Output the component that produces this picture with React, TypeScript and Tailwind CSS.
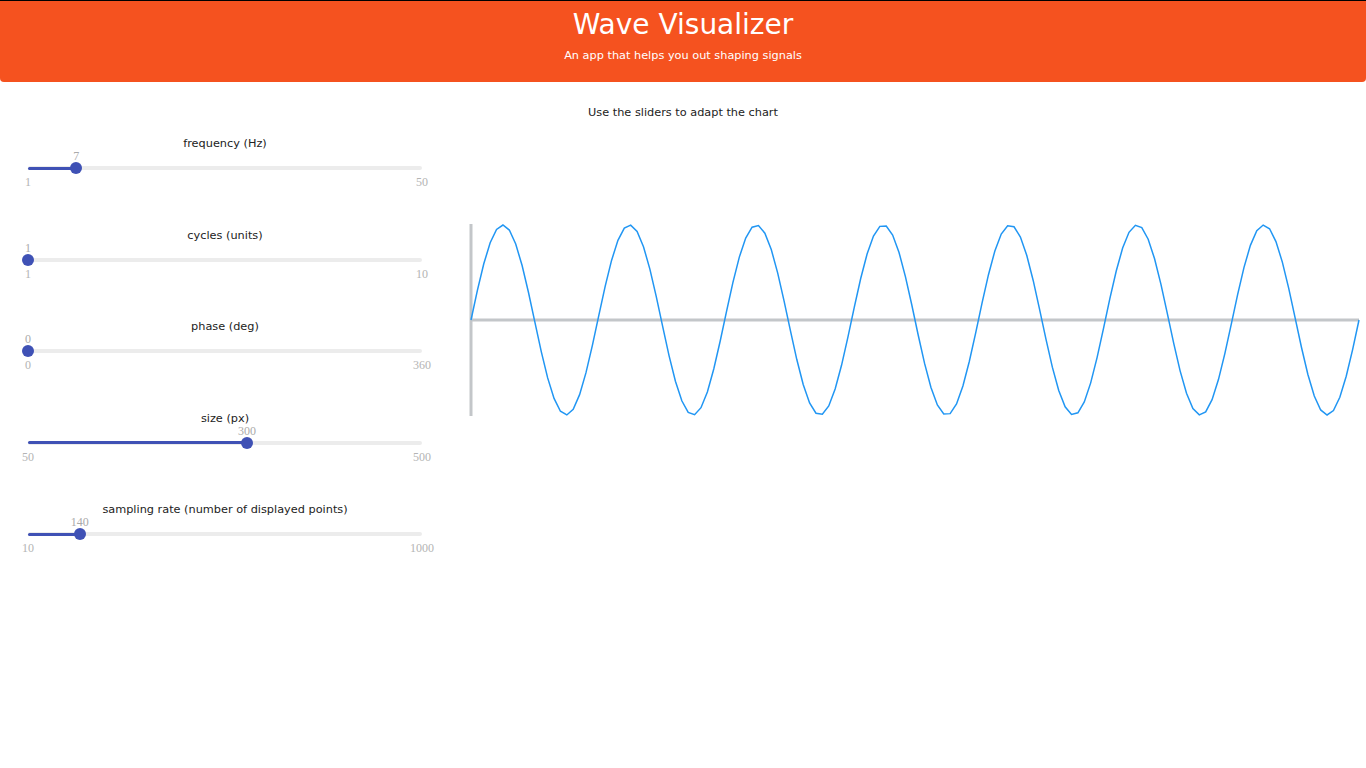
import { useState } from "react"

type SliderDef = {
    key: string;
    label: string;
    min: number;
    max: number;
}

const SLIDERS: SliderDef[] = [
    { key: "frequency", label: "frequency (Hz)", min: 1, max: 50 },
    { key: "cycles", label: "cycles (units)", min: 1, max: 10 },
    { key: "phase", label: "phase (deg)", min: 0, max: 360 },
    { key: "size", label: "size (px)", min: 50, max: 500 },
    { key: "sampling", label: "sampling rate (number of displayed points)", min: 10, max: 1000 },
]

const font = "font-['DejaVu_Sans',sans-serif]"
const serif = "font-['Liberation_Serif','DejaVu_Serif',serif]"

const Slider = ({ def, value, onChange }: { def: SliderDef; value: number; onChange: (v: number) => void }) => {
    const pct = ((value - def.min) / (def.max - def.min)) * 100

    const handleClick = (e: React.MouseEvent<HTMLDivElement>) => {
        const rect = e.currentTarget.getBoundingClientRect()
        const ratio = Math.min(1, Math.max(0, (e.clientX - rect.left) / rect.width))
        onChange(Math.round(def.min + ratio * (def.max - def.min)))
    }

    return (
        <div className="h-[91.5px] pt-px">
            <div className={`h-4 leading-4 text-[11.3px] text-center text-[#222] ${font}`}>{def.label}</div>
            <div className="relative h-[10px]">
                <span
                    className={`absolute -top-[2px] -translate-x-1/2 text-[12px] leading-3 text-[#aaa] ${serif}`}
                    style={{ left: `${pct}%` }}
                >
                    {value}
                </span>
            </div>
            <div className="relative h-3 flex items-center cursor-pointer" onClick={handleClick}>
                <div className="w-full h-[4px] rounded-full bg-[#ececec]" />
                <div className="absolute left-0 h-[3px] rounded-full bg-[#3f51b5]" style={{ width: `${pct}%` }} />
                <div
                    className="absolute w-3 h-3 -translate-x-1/2 rounded-full bg-[#3f51b5]"
                    style={{ left: `${pct}%` }}
                />
            </div>
            <div className={`relative h-3 mt-[2px] text-[12px] leading-3 text-[#b4b4b4] ${serif}`}>
                <span className="absolute left-0 -translate-x-1/2">{def.min}</span>
                <span className="absolute right-0 translate-x-1/2">{def.max}</span>
            </div>
        </div>
    )
}

const WaveChart = ({ values }: { values: Record<string, number> }) => {
    const width = 888
    const height = 190
    const x0 = 2
    const mid = height / 2 + 1
    const amp = height / 2
    const n = values.sampling
    const periods = values.frequency * values.cycles
    const phase = (values.phase * Math.PI) / 180

    const points: string[] = []
    for (let i = 0; i < n; i++) {
        const t = i / (n - 1)
        const x = x0 + t * width
        const y = mid - amp * Math.sin(2 * Math.PI * periods * t + phase)
        points.push(`${x.toFixed(2)},${y.toFixed(2)}`)
    }

    return (
        <svg width={width + 4} height={height + 2} className="block">
            <line x1={x0} y1={0} x2={x0} y2={height + 2} stroke="#c3c6c9" strokeWidth={3} />
            <line x1={x0} y1={mid} x2={x0 + width} y2={mid} stroke="#c3c6c9" strokeWidth={3} />
            <polyline points={points.join(" ")} fill="none" stroke="#2196f3" strokeWidth={1.5} />
        </svg>
    )
}

export default function App() {
    const [values, setValues] = useState<Record<string, number>>({
        frequency: 7,
        cycles: 1,
        phase: 0,
        size: 300,
        sampling: 140,
    })

    return (
        <div className={`min-h-[768px] bg-white ${font}`}>
            <header className="h-[82px] border-t border-black bg-[#f5521f] rounded-b-[4px] text-white text-center">
                <h1 className="pt-[6px] text-[28px] leading-9">Wave Visualizer</h1>
                <p className="mt-[5px] text-[11.3px] leading-4">An app that helps you out shaping signals</p>
            </header>
            <p className="mt-[23px] text-center text-[11.3px] leading-4 text-[#222]">Use the sliders to adapt the chart</p>
            <div className="flex mt-[14px]">
                <div className="w-[450px] px-[28px]">
                    {SLIDERS.map((def) => (
                        <Slider
                            key={def.key}
                            def={def}
                            value={values[def.key]}
                            onChange={(v) => setValues((prev) => ({ ...prev, [def.key]: v }))}
                        />
                    ))}
                </div>
                <div className="pl-[19px] pt-[89px]">
                    <WaveChart values={values} />
                </div>
            </div>
        </div>
    )
}
